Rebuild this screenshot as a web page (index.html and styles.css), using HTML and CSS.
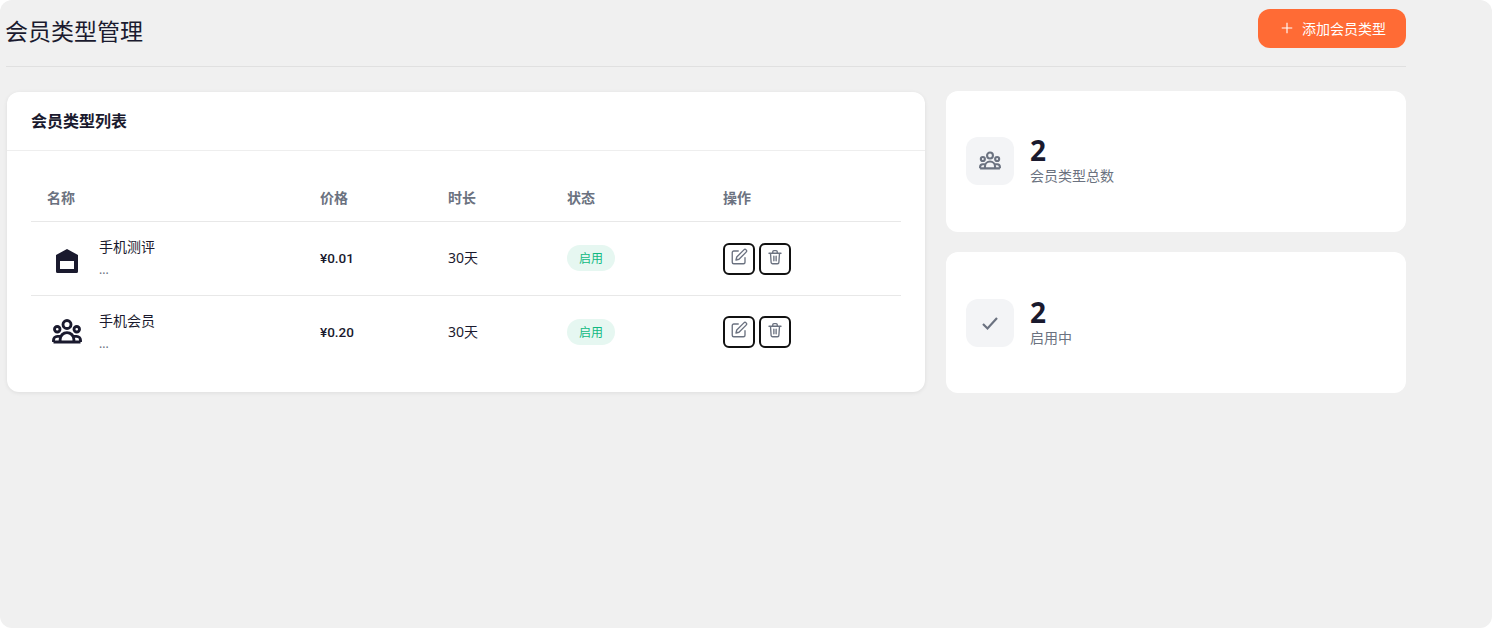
FILE: index.html
```html
<!DOCTYPE html>
<html lang="zh-CN">
<head>
  <meta charset="UTF-8">
  <title>会员类型管理</title>
  <link rel="stylesheet" href="styles.css">
</head>
<body>
  <main class="page">
    <header class="page-header">
      <h1>会员类型管理</h1>
      <button class="add-btn">
        <svg class="add-icon" viewBox="0 0 24 24"><path d="M12 5v14M5 12h14"/></svg>
        添加会员类型
      </button>
    </header>

    <div class="layout">
      <section class="card list-card">
        <h2 class="card-title">会员类型列表</h2>
        <div class="table-wrap">
          <table>
            <thead>
              <tr>
                <th class="col-name">名称</th>
                <th class="col-price">价格</th>
                <th class="col-time">时长</th>
                <th class="col-status">状态</th>
                <th>操作</th>
              </tr>
            </thead>
            <tbody>
              <tr>
                <td>
                  <div class="type-cell">
                    <svg class="type-icon" viewBox="0 0 24 24"><path fill-rule="evenodd" d="M12 4.800l8.800 4.800V22.800a1.200 1.200 0 0 1-1.200 1.200H4.400a1.200 1.200 0 0 1-1.200-1.200V9.600zM6.400 14.400v6.400h11.200v-6.400z"/></svg>
                    <div class="type-text">
                      <div class="type-name">手机测评</div>
                      <div class="type-desc">...</div>
                    </div>
                  </div>
                </td>
                <td class="price">¥0.01</td>
                <td>30天</td>
                <td><span class="badge">启用</span></td>
                <td>
                  <div class="actions">
                    <button class="icon-btn"><svg viewBox="0 0 24 24"><path d="M11 4H5a2 2 0 0 0-2 2v13a2 2 0 0 0 2 2h13a2 2 0 0 0 2-2v-6"/><path d="M18.500 2.500a2.120 2.120 0 0 1 3 3L12 15l-4 1 1-4z"/></svg></button>
                    <button class="icon-btn"><svg viewBox="0 0 24 24"><path d="M4 7h16M9 7V5a1.500 1.500 0 0 1 1.500-1.500h3A1.500 1.500 0 0 1 15 5v2M18 7l-.8 12a2 2 0 0 1-2 2H8.800a2 2 0 0 1-2-2L6 7M10.500 11v6M13.500 11v6"/></svg></button>
                  </div>
                </td>
              </tr>
              <tr>
                <td>
                  <div class="type-cell">
                    <svg class="type-icon" viewBox="0 0 24 24"><use href="#people"/></svg>
                    <div class="type-text">
                      <div class="type-name">手机会员</div>
                      <div class="type-desc">...</div>
                    </div>
                  </div>
                </td>
                <td class="price">¥0.20</td>
                <td>30天</td>
                <td><span class="badge">启用</span></td>
                <td>
                  <div class="actions">
                    <button class="icon-btn"><svg viewBox="0 0 24 24"><path d="M11 4H5a2 2 0 0 0-2 2v13a2 2 0 0 0 2 2h13a2 2 0 0 0 2-2v-6"/><path d="M18.500 2.500a2.120 2.120 0 0 1 3 3L12 15l-4 1 1-4z"/></svg></button>
                    <button class="icon-btn"><svg viewBox="0 0 24 24"><path d="M4 7h16M9 7V5a1.500 1.500 0 0 1 1.500-1.500h3A1.500 1.500 0 0 1 15 5v2M18 7l-.8 12a2 2 0 0 1-2 2H8.800a2 2 0 0 1-2-2L6 7M10.500 11v6M13.500 11v6"/></svg></button>
                  </div>
                </td>
              </tr>
            </tbody>
          </table>
        </div>
      </section>

      <aside class="side">
        <div class="card stat-card">
          <div class="stat-icon"><svg viewBox="0 0 24 24"><use href="#people"/></svg></div>
          <div>
            <div class="stat-num">2</div>
            <div class="stat-label">会员类型总数</div>
          </div>
        </div>
        <div class="card stat-card">
          <div class="stat-icon"><svg class="check" viewBox="0 0 24 24"><path d="M5 13l4.500 4.500L19 7"/></svg></div>
          <div>
            <div class="stat-num">2</div>
            <div class="stat-label">启用中</div>
          </div>
        </div>
      </aside>
    </div>
  </main>

  <svg class="defs" width="0" height="0">
    <symbol id="people" viewBox="0 0 24 24">
      <g fill="none" stroke="currentColor" stroke-width="2.300">
        <circle cx="12" cy="6" r="3.200"/>
        <circle cx="4.200" cy="9.800" r="2.200"/>
        <circle cx="19.800" cy="9.800" r="2.200"/>
        <path d="M6.500 20v-2a5.500 5.500 0 0 1 11 0v2"/>
        <path d="M1.200 20v-1.500a3 3 0 0 1 3-3H6.500M22.800 20v-1.500a3 3 0 0 0-3-3H17.500M1.200 20h21.600"/>
      </g>
    </symbol>
  </svg>
</body>
</html>
```

FILE: styles.css
```css
* {
  box-sizing: border-box;
}

body {
  margin: 0;
  height: 628px;
  overflow: hidden;
  background: #fff;
  color: #1a1a2e;
  font-family: "Noto Sans", "Noto Sans CJK SC", sans-serif;
}

.page {
  height: 628px;
  padding: 9px 86px 0 6px;
  background: #f0f0f0;
  border-radius: 12px;
}

.page-header {
  display: flex;
  justify-content: space-between;
  align-items: flex-start;
  height: 58px;
  border-bottom: 1px solid #e0e0e0;
}

h1 {
  margin: 4px 0 0 -1px;
  font-size: 23px;
  font-weight: 400;
  line-height: 36px;
}

.add-btn {
  display: flex;
  align-items: center;
  gap: 6px;
  width: 148px;
  height: 39px;
  padding: 0 0 2px 20px;
  border: none;
  border-radius: 12px;
  background: #ff6b35;
  color: #fff;
  font: inherit;
  font-size: 14px;
}

.add-icon {
  width: 18px;
  height: 18px;
  fill: none;
  stroke: #fff;
  stroke-width: 1.500;
}

.layout {
  display: grid;
  grid-template-columns: 919px 460px;
  gap: 21px;
  margin-top: 24px;
}

.card {
  background: #fff;
  border-radius: 12px;
}

.list-card {
  height: 300px;
  margin: 1px 0 0 1px;
  box-shadow: 0 1px 4px rgba(0, 0, 0, 0.08);
}

.card-title {
  margin: 0;
  height: 58px;
  padding: 0 24px;
  border-bottom: 1px solid #eeeeee;
  font-size: 16px;
  font-weight: 700;
  line-height: 58px;
  box-sizing: content-box;
}

.table-wrap {
  padding: 23px 24px 0;
}

table {
  width: 100%;
  border-collapse: collapse;
  font-size: 14px;
}

th {
  height: 47px;
  padding: 0 16px;
  border-bottom: 1px solid #e8e8e8;
  color: #6b7280;
  font-weight: 700;
  text-align: left;
}

td {
  height: 74px;
  padding: 0 16px;
  line-height: 18px;
}

tbody tr:first-child td {
  border-bottom: 1px solid #e8e8e8;
}

tbody tr:first-child .actions {
  margin-top: 2px;
}

.col-name { width: 273px; }
.col-price { width: 128px; }
.col-time { width: 119px; }
.col-status { width: 156px; }

.type-cell {
  display: flex;
  align-items: center;
  gap: 12px;
}

.type-icon {
  width: 40px;
  height: 40px;
  padding: 5px;
  color: #1a1a2e;
  fill: #1a1a2e;
}

.type-text {
  margin-top: -2px;
}

.type-name {
  line-height: 20px;
}

.type-desc {
  margin-top: 5px;
  color: #6b7280;
  font-size: 12px;
  line-height: 16px;
}

.price {
  font-family: Roboto, "Noto Sans CJK SC", sans-serif;
  font-size: 13.500px;
  font-weight: 500;
}

.badge {
  display: inline-block;
  width: 48px;
  height: 26px;
  border-radius: 13px;
  background: #e6f7f1;
  color: #10b981;
  font-size: 12px;
  line-height: 27px;
  text-align: center;
  vertical-align: middle;
}

.actions {
  display: flex;
  gap: 4px;
}

.icon-btn {
  display: flex;
  justify-content: center;
  padding: 3px 0 0;
  width: 32px;
  height: 32px;
  border: 2px solid #111;
  border-radius: 6px;
  background: #fff;
}

.icon-btn svg {
  width: 18px;
  height: 18px;
  fill: none;
  stroke: #6b7280;
  stroke-width: 1.800;
  stroke-linecap: round;
  stroke-linejoin: round;
}

.side {
  display: flex;
  flex-direction: column;
  gap: 20px;
}

.stat-card {
  display: flex;
  align-items: center;
  gap: 16px;
  height: 141px;
  padding: 0 20px 1px;
}

.stat-card + .stat-card {
  padding-bottom: 0;
}

.stat-icon {
  display: flex;
  align-items: center;
  justify-content: center;
  width: 48px;
  height: 48px;
  border-radius: 12px;
  background: #f3f4f6;
  color: #6b7280;
}

.stat-icon svg {
  width: 22px;
  height: 22px;
}

.stat-icon .check {
  width: 24px;
  height: 24px;
  fill: none;
  stroke: #6b7280;
  stroke-width: 2.200;
}

.stat-num {
  font-size: 28px;
  font-weight: 700;
  line-height: 28px;
}

.stat-label {
  margin-top: 2px;
  color: #6b7280;
  font-size: 14px;
  line-height: 20px;
}

.defs {
  position: absolute;
}
```
